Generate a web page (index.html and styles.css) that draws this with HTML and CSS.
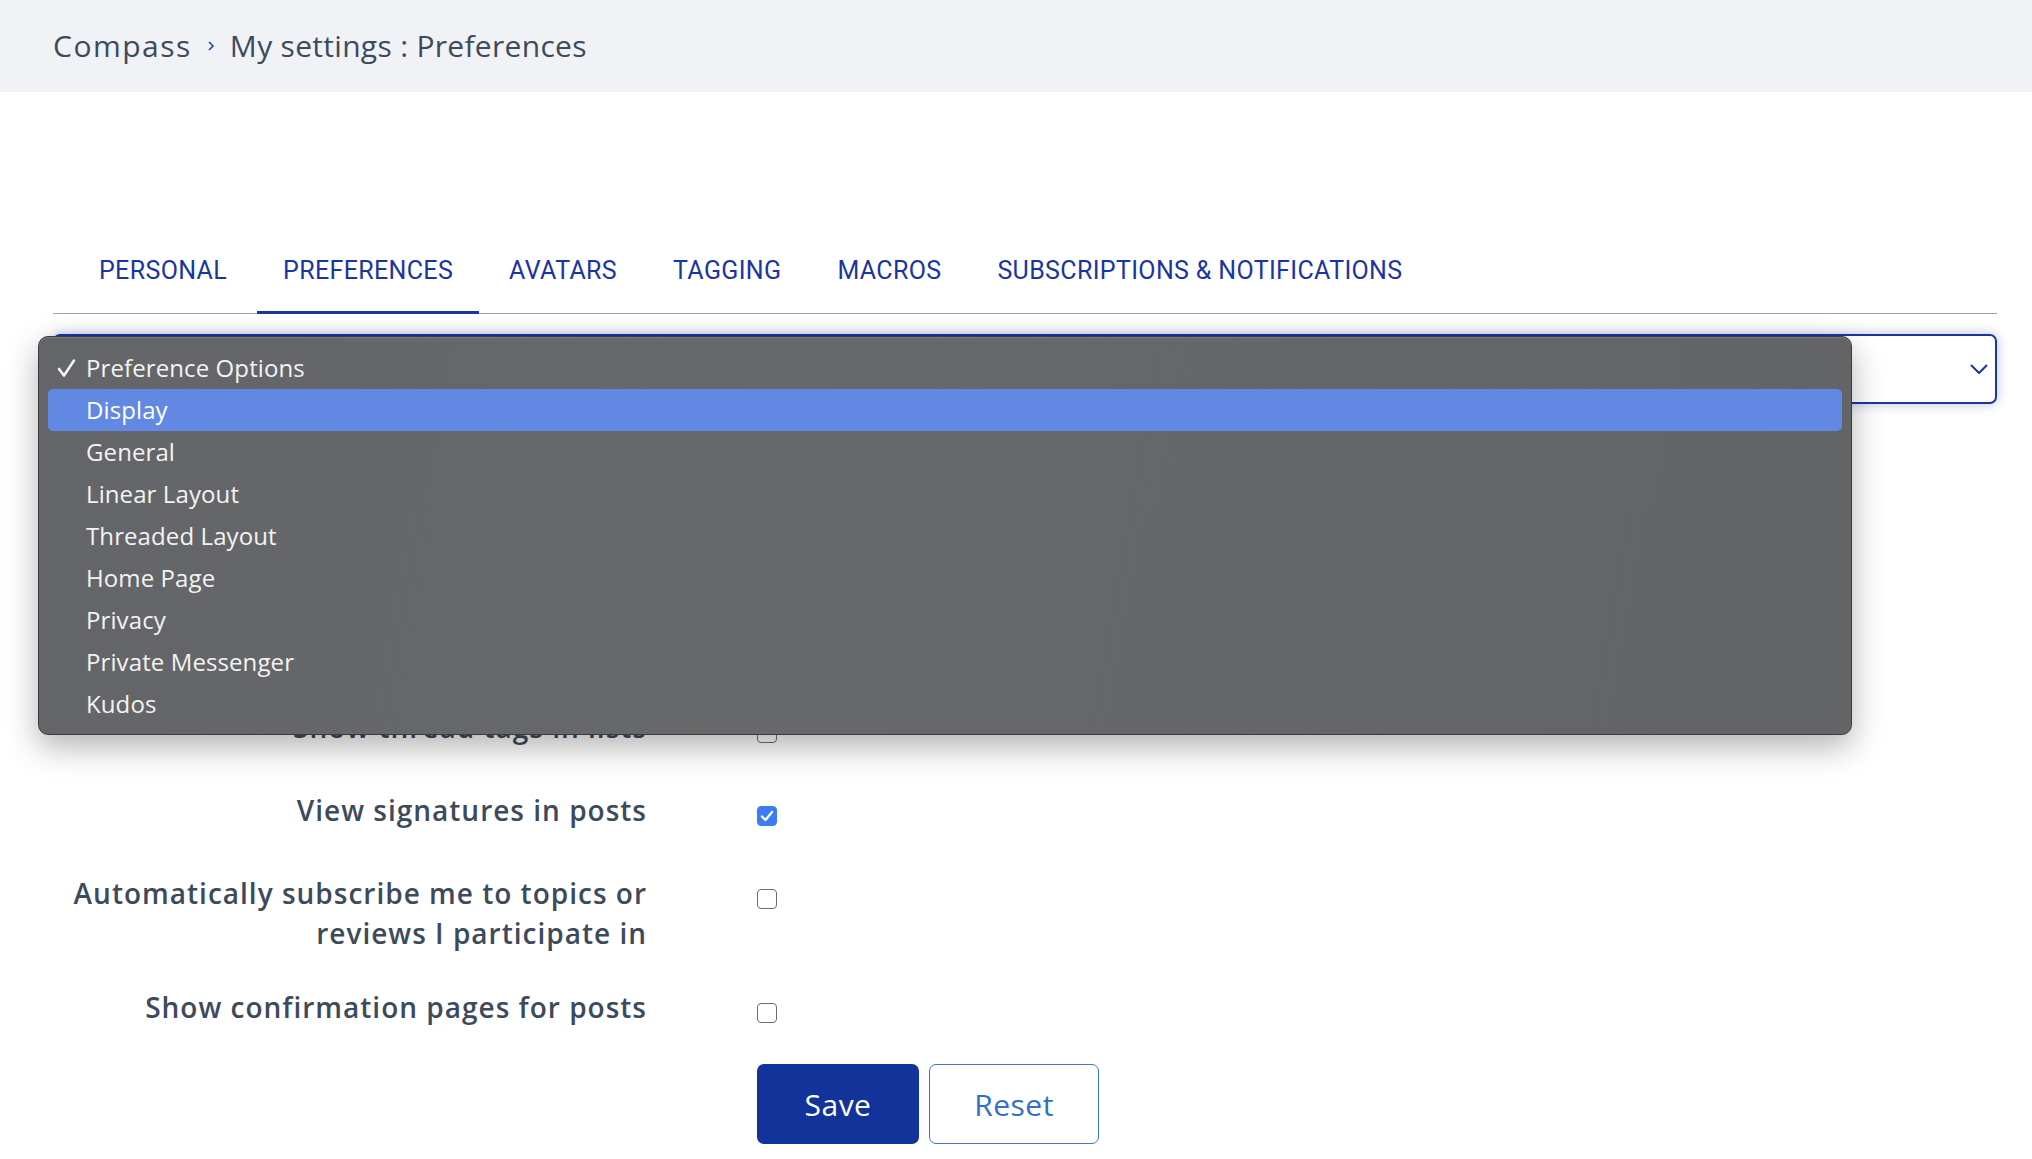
FILE: index.html
```html
<!DOCTYPE html>
<html lang="en">
<head>
  <meta charset="UTF-8" />
  <meta name="viewport" content="width=device-width, initial-scale=1.0"/>
  <title>My settings : Preferences</title>
  <link rel="stylesheet" href="styles.css">
</head>
<body>
  <header class="crumbs">
    <a class="crumb home" href="#">Compass</a>
    <svg class="crumb-sep" width="8" height="12" viewBox="0 0 8 12"><path d="M2 2 L6 6 L2 10" fill="none" stroke="#2541b2" stroke-width="1.6"/></svg>
    <span class="crumb current">My settings : Preferences</span>
  </header>

  <main class="page">
    <nav class="tabs">
      <a class="tab" href="#">PERSONAL</a>
      <a class="tab active" href="#">PREFERENCES</a>
      <a class="tab" href="#">AVATARS</a>
      <a class="tab" href="#">TAGGING</a>
      <a class="tab" href="#">MACROS</a>
      <a class="tab" href="#">SUBSCRIPTIONS &amp; NOTIFICATIONS</a>
    </nav>

    <div class="picker">
      <div class="select">
        <svg class="chevron" width="18" height="10" viewBox="0 0 18 10"><path d="M1 1 L9 9 L17 1" fill="none" stroke="#1a35a0" stroke-width="2"/></svg>
      </div>
      <ul class="menu">
        <li class="opt checked">
          <svg class="tick" width="19" height="20" viewBox="0 0 19 20"><path d="M2 11 L7 17.5 L17 2.5" fill="none" stroke="#f4f4f4" stroke-width="2.6" stroke-linecap="round" stroke-linejoin="round"/></svg>
          Preference Options
        </li>
        <li class="opt hover">Display</li>
        <li class="opt">General</li>
        <li class="opt">Linear Layout</li>
        <li class="opt">Threaded Layout</li>
        <li class="opt">Home Page</li>
        <li class="opt">Privacy</li>
        <li class="opt">Private Messenger</li>
        <li class="opt">Kudos</li>
      </ul>
    </div>

    <form class="prefs">
      <div class="row">
        <label>Show tooltips on hover</label>
        <span class="box"></span>
      </div>
      <div class="row">
        <label>Show images in posts</label>
        <span class="box on"></span>
      </div>
      <div class="row">
        <label>Show kudos count in lists</label>
        <span class="box"></span>
      </div>
      <div class="row">
        <label>Show thread tags in lists</label>
        <span class="box"></span>
      </div>
      <div class="row">
        <label>View signatures in posts</label>
        <span class="box on">
          <svg width="20" height="20" viewBox="0 0 20 20"><path d="M5 10.5 L8.5 14 L15 6" fill="none" stroke="#fff" stroke-width="2.4" stroke-linecap="round" stroke-linejoin="round"/></svg>
        </span>
      </div>
      <div class="row">
        <label>Automatically subscribe me to topics or reviews I participate in</label>
        <span class="box"></span>
      </div>
      <div class="row">
        <label>Show confirmation pages for posts</label>
        <span class="box"></span>
      </div>
      <div class="actions">
        <button type="button" class="btn save">Save</button>
        <button type="button" class="btn reset">Reset</button>
      </div>
    </form>
  </main>
</body>
</html>
```

FILE: styles.css
```css
* {
  box-sizing: border-box;
}

body {
  margin: 0;
  font-family: 'Open Sans', 'Noto Sans', sans-serif;
  color: #3d4a5c;
  background: #fff;
}

.crumbs {
  height: 92px;
  background: #f0f2f5;
  display: flex;
  align-items: center;
  gap: 15px;
  padding: 0 0 2px 53px;
  font-size: 30px;
  letter-spacing: 0.3px;
}

.crumb {
  color: #3d4a5c;
  text-decoration: none;
}

.crumb.home {
  letter-spacing: 1.5px;
}

.crumb-sep {
  margin-top: 2px;
}

.page {
  padding: 144px 35px 0 53px;
}

.tabs {
  display: flex;
  gap: 4px;
  padding-left: 20px;
  border-bottom: 1px solid #a2a2a2;
}

.tab {
  padding: 20px 26px 25px;
  line-height: 30px;
  font-family: 'Roboto', sans-serif;
  font-size: 25px;
  letter-spacing: 0.35px;
  color: #1a35a0;
  text-decoration: none;
  border-bottom: 3px solid transparent;
  margin-bottom: -1px;
}

.tab.active {
  border-bottom-color: #1a35a0;
}

.picker {
  position: relative;
  margin-top: 20px;
}

.select {
  height: 70px;
  border: 2px solid #1a35a0;
  border-radius: 7px;
  box-shadow: 0 0 12px rgba(26, 53, 160, 0.3);
  display: flex;
  align-items: center;
  justify-content: flex-end;
  padding: 0 7px 0 20px;
}

.menu {
  position: absolute;
  top: 2px;
  left: -15px;
  width: 1814px;
  margin: 0;
  padding: 10px 9px 9px;
  list-style: none;
  background: linear-gradient(100deg, #646568, #67686a 40%, #636466);
  border: 1px solid #3c3c3e;
  border-radius: 10px;
  box-shadow: 0 12px 32px rgba(0, 0, 0, 0.3), inset 0 1px 0 rgba(255, 255, 255, 0.12);
  z-index: 5;
}

.opt {
  position: relative;
  height: 42px;
  line-height: 42px;
  padding-left: 38px;
  font-size: 24px;
  letter-spacing: 0.1px;
  color: #f3f3f3;
  border-radius: 5px;
}

.opt.hover {
  background: #6189e3;
  color: #fff;
}

.tick {
  position: absolute;
  left: 9px;
  top: 11px;
}

.prefs {
  margin-top: 54px;
  display: flex;
  flex-direction: column;
  gap: 34px;
}

.row {
  display: flex;
  align-items: flex-start;
  gap: 110px;
  min-height: 49px;
}

.row label {
  width: 594px;
  text-align: right;
  font-size: 28px;
  font-weight: 600;
  letter-spacing: 1px;
  line-height: 40px;
  color: #3d4a5c;
}

.box {
  width: 20px;
  height: 20px;
  margin-top: 16px;
  border: 1.5px solid #6e6e6e;
  border-radius: 4px;
  background: #fff;
  flex: none;
}

.box.on {
  background: #3b7cf2;
  border-color: #3b7cf2;
}

.box svg {
  display: block;
  margin: -1.5px;
}

.actions {
  display: flex;
  gap: 10px;
  margin: -6px 0 0 704px;
}

.btn {
  height: 80px;
  border-radius: 7px;
  font-family: 'Open Sans', sans-serif;
  font-size: 30px;
  font-weight: 500;
  letter-spacing: 0.5px;
  cursor: pointer;
}

.save {
  width: 162px;
  background: #12339a;
  border: none;
  color: #fff;
}

.reset {
  width: 170px;
  background: #fff;
  border: 1px solid #3a78d0;
  color: #2f6fc6;
}
```
